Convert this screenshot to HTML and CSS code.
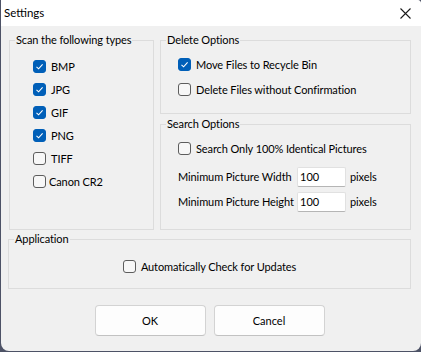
FILE: index.html
```html
<!DOCTYPE html>
<html lang="en">
<head>
    <meta charset="UTF-8">
    <meta name="viewport" content="width=device-width, initial-scale=1.0">
    <title>Settings</title>
    <link rel="stylesheet" href="styles.css">
</head>
<body>
    <div class="window">
        <div class="titlebar">
            <span class="title">Settings</span>
            <svg class="close" width="11" height="11" viewBox="0 0 11 11" fill="none" stroke="#1a1a1a" stroke-width="1.1">
                <path d="M0.5 0.5 L10.5 10.5 M10.5 0.5 L0.5 10.5"/>
            </svg>
        </div>

        <div class="content">
            <div class="top-row">
                <div class="group types">
                    <span class="group-label">Scan the following types</span>
                    <div class="check-list">
                        <label class="check"><span class="box on"><svg viewBox="0 0 13 13"><path d="M3.5 6.8 L5.6 8.8 L9.6 4.4"/></svg></span>BMP</label>
                        <label class="check"><span class="box on"><svg viewBox="0 0 13 13"><path d="M3.5 6.8 L5.6 8.8 L9.6 4.4"/></svg></span>JPG</label>
                        <label class="check"><span class="box on"><svg viewBox="0 0 13 13"><path d="M3.5 6.8 L5.6 8.8 L9.6 4.4"/></svg></span>GIF</label>
                        <label class="check"><span class="box on"><svg viewBox="0 0 13 13"><path d="M3.5 6.8 L5.6 8.8 L9.6 4.4"/></svg></span>PNG</label>
                        <label class="check"><span class="box"></span>TIFF</label>
                        <label class="check tight"><span class="box"></span>Canon CR2</label>
                    </div>
                </div>

                <div class="right-col">
                    <div class="group delete">
                        <span class="group-label">Delete Options</span>
                        <div class="check-list">
                            <label class="check"><span class="box on"><svg viewBox="0 0 13 13"><path d="M3.5 6.8 L5.6 8.8 L9.6 4.4"/></svg></span>Move Files to Recycle Bin</label>
                            <label class="check"><span class="box"></span>Delete Files without Confirmation</label>
                        </div>
                    </div>

                    <div class="group search">
                        <span class="group-label">Search Options</span>
                        <div class="check-list">
                            <label class="check"><span class="box"></span>Search Only 100% Identical Pictures</label>
                            <div class="fields">
                                <div class="field">
                                    <span>Minimum Picture Width</span>
                                    <input type="text" value="100">
                                    <span class="unit">pixels</span>
                                </div>
                                <div class="field">
                                    <span>Minimum Picture Height</span>
                                    <input type="text" value="100">
                                    <span class="unit">pixels</span>
                                </div>
                            </div>
                        </div>
                    </div>
                </div>
            </div>

            <div class="group application">
                <span class="group-label">Application</span>
                <div class="check-list">
                    <label class="check"><span class="box"></span>Automatically Check for Updates</label>
                </div>
            </div>

            <div class="buttons">
                <button class="btn">OK</button>
                <button class="btn">Cancel</button>
            </div>
        </div>
    </div>
</body>
</html>
```

FILE: styles.css
```css
body {
    margin: 0;
    background-color: #4d5266;
    font-family: Lato, "Noto Sans", sans-serif;
    font-size: 11px;
    letter-spacing: -0.1px;
    color: #000;
}

.window {
    margin-left: 1px;
    width: 420px;
    height: 351px;
    background-color: #f0f0f0;
    border-radius: 0 4px 8px 8px;
    overflow: hidden;
    display: flex;
    flex-direction: column;
}

.titlebar {
    height: 26px;
    background-color: #fff;
    display: flex;
    align-items: center;
    justify-content: space-between;
    padding: 0 10px 0 3px;
}

.title {
    font-size: 11.5px;
    line-height: 16px;
    letter-spacing: 0;
}

.close {
    display: block;
    margin-top: 1px;
}

.content {
    padding: 14px 10px 0 7px;
}

.top-row {
    display: grid;
    grid-template-columns: 145px 251px;
    column-gap: 6px;
    margin-left: 1px;
}

.group {
    border: 1px solid #dcdcdc;
    box-sizing: border-box;
}

.group-label {
    display: block;
    width: fit-content;
    height: 16px;
    line-height: 16px;
    margin: -9px 0 0 5px;
    padding: 0 1px;
    background-color: #f0f0f0;
    white-space: nowrap;
}

.check {
    display: flex;
    align-items: center;
    gap: 5px;
    height: 23px;
    white-space: nowrap;
}

.check.tight {
    gap: 3px;
}

.box {
    flex: none;
    width: 13px;
    height: 13px;
    box-sizing: border-box;
    border: 1px solid #5d5d5d;
    border-radius: 3px;
    background-color: #f7f7f7;
}

.box.on {
    background-color: #005fb8;
    border-color: #005fb8;
}

.box svg {
    display: block;
    width: 13px;
    height: 13px;
    margin: -1px;
    fill: none;
    stroke: #fff;
    stroke-width: 1.1;
}

/* scan types */
.types {
    height: 190px;
}

.types .check-list {
    padding: 7px 0 0 23px;
}

/* right column */
.right-col {
    display: flex;
    flex-direction: column;
    gap: 10px;
}

.delete {
    height: 74px;
}

.delete .check-list {
    padding: 4px 0 0 17px;
}

.delete .check {
    height: 25px;
}

.search {
    height: 106px;
}

.search .check-list {
    padding: 4px 0 0 17px;
}

.search .check {
    height: 24px;
}

.fields {
    margin-top: 4px;
}

.field {
    display: grid;
    grid-template-columns: 119px 49px auto;
    align-items: center;
    height: 25px;
    white-space: nowrap;
}

.field input {
    box-sizing: border-box;
    width: 49px;
    height: 20px;
    padding: 0 2px;
    border: 1px solid #e1e1e1;
    border-bottom-color: #b5b5b5;
    border-radius: 2px;
    background-color: #fff;
    font-family: Lato, "Noto Sans", sans-serif;
    font-size: 11px;
    color: #000;
    outline: none;
}

.unit {
    margin-left: 4px;
}

/* application */
.application {
    height: 50px;
    margin-top: 9px;
}

.application .check-list {
    padding-top: 7px;
}

.application .check {
    justify-content: center;
    height: 24px;
}

.buttons {
    display: flex;
    justify-content: center;
    gap: 8px;
    margin-top: 16px;
}

.btn {
    width: 111px;
    height: 31px;
    background-color: #fdfdfd;
    border: 1px solid #d3d3d3;
    border-bottom-color: #c2c2c2;
    border-radius: 4px;
    font-family: Lato, "Noto Sans", sans-serif;
    font-size: 11px;
    color: #000;
}
```
